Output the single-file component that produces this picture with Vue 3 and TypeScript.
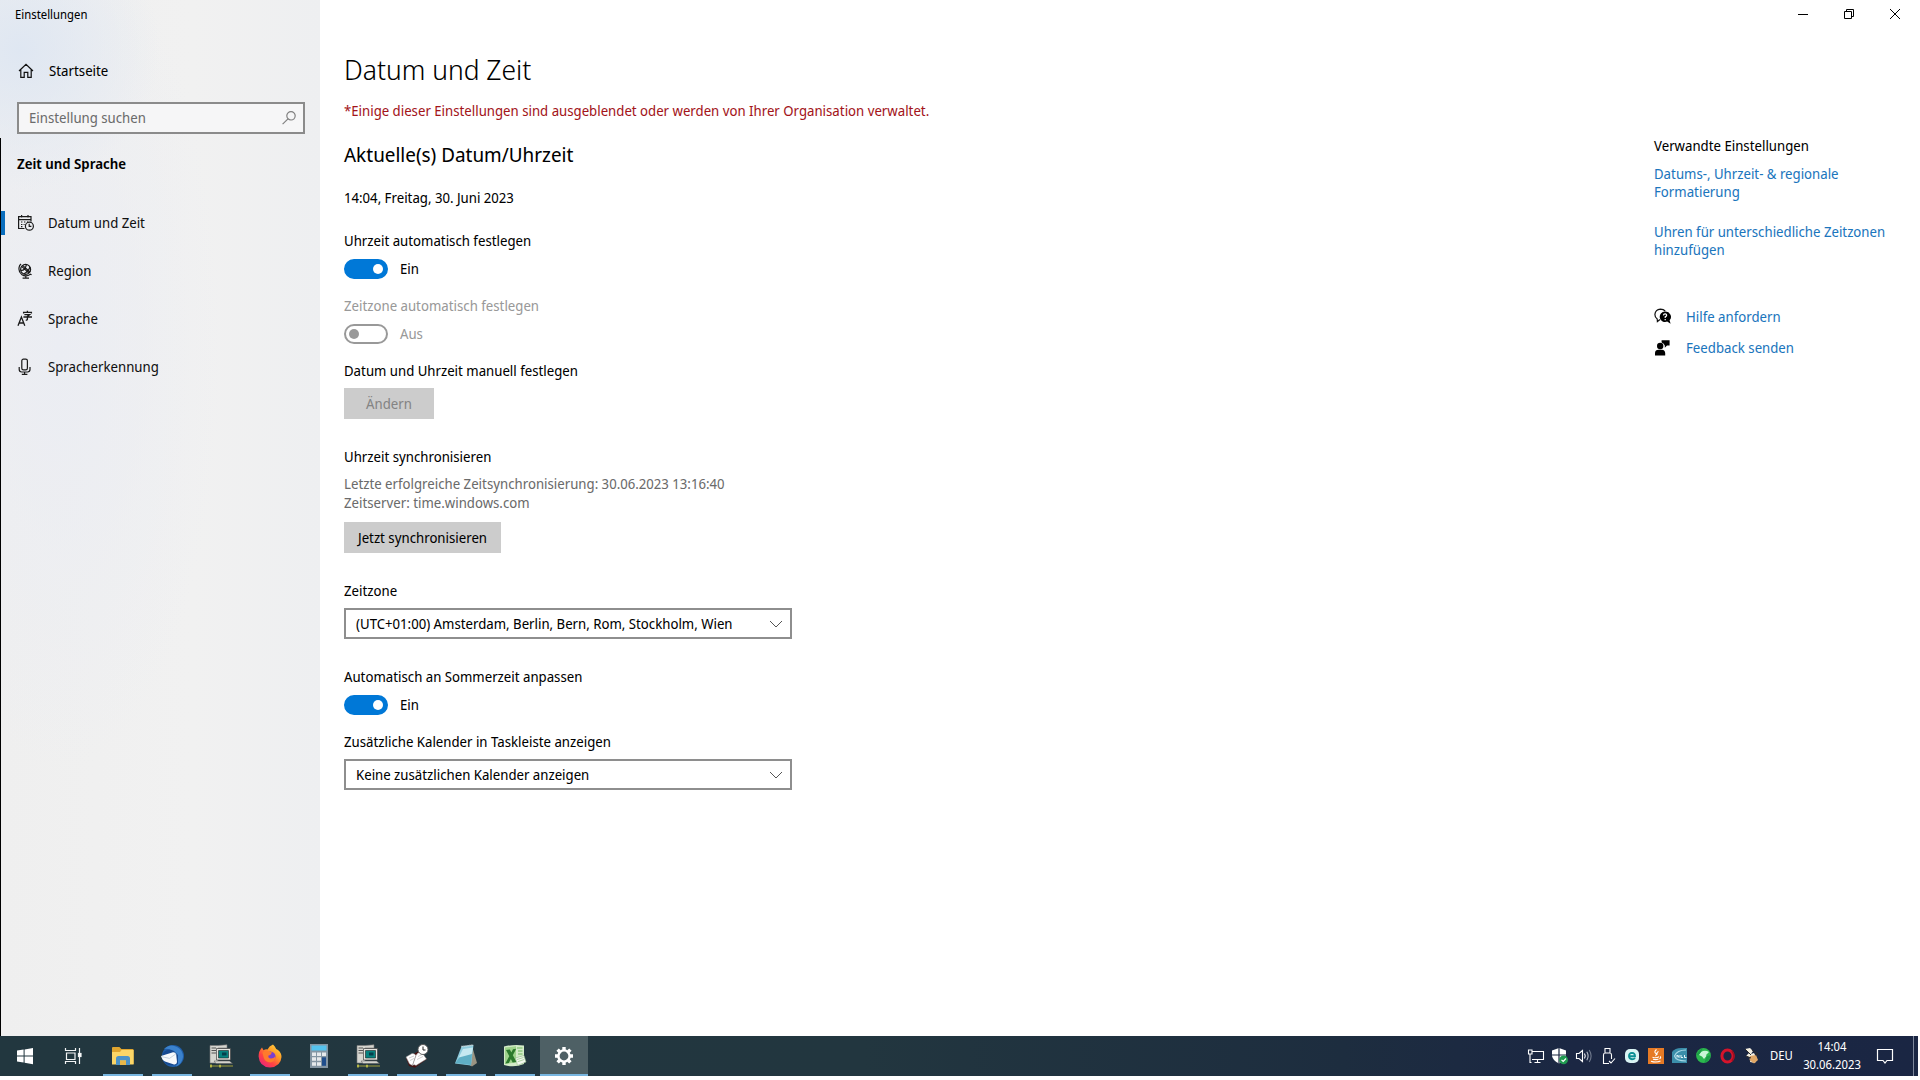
<script setup lang="ts">
import { ref } from 'vue'

interface NavItem {
  id: string
  label: string
}

interface TaskItem {
  id: string
  label: string
  icon: string
  open?: boolean
  active?: boolean
}

const nav: NavItem[] = [
  { id: 'date', label: 'Datum und Zeit' },
  { id: 'region', label: 'Region' },
  { id: 'language', label: 'Sprache' },
  { id: 'speech', label: 'Spracherkennung' },
]
const current = ref('date')

const autoTime = ref(true)
const autoZone = ref(false)
const summerTime = ref(true)
const search = ref('')

const tasks: TaskItem[] = [
  { id: 'start', label: 'Start', icon: 'start' },
  { id: 'view', label: 'Aktive Anwendungen', icon: 'view' },
  { id: 'explorer', label: 'Explorer', icon: 'explorer', open: true },
  { id: 'mail', label: 'Thunderbird', icon: 'mail', open: true },
  { id: 'pc1', label: 'Terminal 1', icon: 'pc' },
  { id: 'firefox', label: 'Firefox', icon: 'firefox', open: true },
  { id: 'calc', label: 'Rechner', icon: 'calc' },
  { id: 'pc2', label: 'Terminal 2', icon: 'pc', open: true },
  { id: 'planner', label: 'Zeiterfassung', icon: 'planner', open: true },
  { id: 'notes', label: 'Editor', icon: 'notes', open: true },
  { id: 'excel', label: 'Excel', icon: 'excel', open: true },
  { id: 'settings', label: 'Einstellungen', icon: 'gear', open: true, active: true },
]

const tray: string[] = ['network', 'shield', 'volume', 'usb', 'eset', 'java', 'dell', 'globe', 'opera', 'pen']
</script>

<template>
  <div class="screen">
    <div class="window">
      <aside class="sidebar">
        <div class="app-name">Einstellungen</div>
        <a class="home" href="#">
          <svg width="18" height="18" viewBox="0 0 18 18" fill="none" stroke="#111" stroke-width="1.2">
            <path d="M2 9 9 2.4 16 9M3.8 7.6V15.4H7.2V10.4H10.8V15.4H14.2V7.6" />
          </svg>
          <span>Startseite</span>
        </a>
        <div class="search">
          <input v-model="search" type="text" placeholder="Einstellung suchen" aria-label="Einstellung suchen" />
          <svg width="16" height="16" viewBox="0 0 16 16" fill="none" stroke="#808080" stroke-width="1.2">
            <circle cx="10" cy="5.8" r="4.2" />
            <path d="M7 8.8 1.6 14.2" />
          </svg>
        </div>
        <h2 class="category">Zeit und Sprache</h2>
        <nav>
          <a v-for="n in nav" :key="n.id" href="#" :class="{ current: n.id === current }" @click.prevent="current = n.id">
            <svg v-if="n.id === 'date'" width="18" height="18" viewBox="0 0 18 18" fill="none" stroke="#1a1a1a" stroke-width="1.2">
              <path d="M7.5 14.5H1.6V2.6H14V7.5M1.6 5.6H14M4.6 1V3.6M11 1V3.6" />
              <path d="M4 8H5.4M7 8H8.4M10 8H11M4 10.5H5.4M6.6 10.5H7.6M4 12.6H5.4" />
              <circle cx="12.4" cy="12.2" r="4" />
              <path d="M12.2 9.8V12.4H14.4" />
            </svg>
            <svg v-else-if="n.id === 'region'" width="18" height="18" viewBox="0 0 18 18" fill="none" stroke="#1a1a1a" stroke-width="1.2">
              <circle cx="8.6" cy="7.4" r="5" />
              <path d="M4.6 4.4 12 11M5.6 3.4 13 10M3.8 8.4Q8 9 9.4 2.6M6.6 12Q11.4 9.6 13 5M4 2 2.6 3.6Q.6 9 4.6 12.4 9 15.4 13.4 12.2L14.6 12.8M8.8 14V16M5.6 16.2H12" />
            </svg>
            <svg v-else-if="n.id === 'language'" width="18" height="18" viewBox="0 0 18 18" fill="none" stroke="#1a1a1a" stroke-width="1.3">
              <path d="M1 15.8 4.4 7 7.8 15.8M2.2 13H6.6" />
              <path d="M6.6 3.4V2.4H14.4V3.6M10.4 .8V2.4M7.4 4.6H12.6L10.4 6.4V9.2Q10.4 10.4 8.8 10M6.4 7H15" />
            </svg>
            <svg v-else width="18" height="18" viewBox="0 0 18 18" fill="none" stroke="#1a1a1a" stroke-width="1.2">
              <rect x="4.8" y="1.2" width="5.6" height="10.6" rx="1.6" />
              <path d="M2.2 9V11.6Q2.2 14 4.6 14H10.6Q13 14 13 11.6V9M7.6 14V16.2M4.8 16.4H10.4" />
            </svg>
            <span>{{ n.label }}</span>
          </a>
        </nav>
      </aside>

      <div class="content">
        <div class="titlebar">
          <button type="button" aria-label="Minimieren">
            <svg width="12" height="12" viewBox="0 0 12 12" stroke="#000" fill="none"><path d="M1 6.5H11" /></svg>
          </button>
          <button type="button" aria-label="Verkleinern">
            <svg width="12" height="12" viewBox="0 0 12 12" stroke="#000" fill="none">
              <path d="M1.5 3.5H8.5V10.5H1.5ZM3.5 3.5V1.5H10.5V8.5H8.5" />
            </svg>
          </button>
          <button type="button" aria-label="Schließen">
            <svg width="12" height="12" viewBox="0 0 12 12" stroke="#000" fill="none"><path d="M1 1 11 11M11 1 1 11" /></svg>
          </button>
        </div>

        <div class="columns">
          <main>
            <h1>Datum und Zeit</h1>
            <p class="notice">*Einige dieser Einstellungen sind ausgeblendet oder werden von Ihrer Organisation verwaltet.</p>
            <h2>Aktuelle(s) Datum/Uhrzeit</h2>
            <p class="now">14:04, Freitag, 30. Juni 2023</p>

            <section class="field">
              <label for="auto-time">Uhrzeit automatisch festlegen</label>
              <div class="switch">
                <input id="auto-time" v-model="autoTime" type="checkbox" role="switch" />
                <span>{{ autoTime ? 'Ein' : 'Aus' }}</span>
              </div>
            </section>
            <section class="field disabled">
              <label for="auto-zone">Zeitzone automatisch festlegen</label>
              <div class="switch">
                <input id="auto-zone" v-model="autoZone" type="checkbox" role="switch" disabled />
                <span>{{ autoZone ? 'Ein' : 'Aus' }}</span>
              </div>
            </section>
            <section class="field">
              <h3>Datum und Uhrzeit manuell festlegen</h3>
              <button class="action change" type="button" disabled>Ändern</button>
            </section>
            <section class="field apart">
              <h3>Uhrzeit synchronisieren</h3>
              <p class="detail">
                Letzte erfolgreiche Zeitsynchronisierung: 30.06.2023 13:16:40<br />
                Zeitserver: time.windows.com
              </p>
              <button class="action" type="button">Jetzt synchronisieren</button>
            </section>
            <section class="field apart">
              <label for="zone">Zeitzone</label>
              <div class="dropdown">
                <select id="zone">
                  <option>(UTC+01:00) Amsterdam, Berlin, Bern, Rom, Stockholm, Wien</option>
                </select>
                <svg width="14" height="8" viewBox="0 0 14 8" fill="none" stroke="#555"><path d="M1 1 7 7 13 1" /></svg>
              </div>
            </section>
            <section class="field apart">
              <label for="summer">Automatisch an Sommerzeit anpassen</label>
              <div class="switch">
                <input id="summer" v-model="summerTime" type="checkbox" role="switch" />
                <span>{{ summerTime ? 'Ein' : 'Aus' }}</span>
              </div>
            </section>
            <section class="field">
              <label for="calendars">Zusätzliche Kalender in Taskleiste anzeigen</label>
              <div class="dropdown">
                <select id="calendars">
                  <option>Keine zusätzlichen Kalender anzeigen</option>
                </select>
                <svg width="14" height="8" viewBox="0 0 14 8" fill="none" stroke="#555"><path d="M1 1 7 7 13 1" /></svg>
              </div>
            </section>
          </main>

          <aside class="related">
            <h3>Verwandte Einstellungen</h3>
            <a class="topic" href="#">Datums-, Uhrzeit- &amp; regionale Formatierung</a>
            <a class="topic" href="#">Uhren für unterschiedliche Zeitzonen hinzufügen</a>
            <div class="support">
              <a href="#">
                <svg width="18" height="18" viewBox="0 0 18 18">
                  <path d="M6 11.6 3.4 13.6 3.2 11Q.8 9 .9 6.4 1.4 1.6 6.4 1.2 9.6 1.2 11.2 3" fill="none" stroke="#111" stroke-width="1.2" />
                  <path d="M11 3.6A5.4 5.2 0 1 0 13.2 13.6L16.6 15.8 15.6 12.2A5.4 5.2 0 0 0 11 3.6Z" fill="#000" />
                  <path d="M9.4 7.4Q9.6 5.8 11.2 5.9 12.8 6.1 12.6 7.5 12.4 8.3 11.2 8.9V10M11.2 11V12.2" fill="none" stroke="#fff" stroke-width="1.2" />
                </svg>
                <span>Hilfe anfordern</span>
              </a>
              <a href="#">
                <svg width="18" height="18" viewBox="0 0 18 18">
                  <circle cx="6.2" cy="7" r="3.2" />
                  <path d="M1 16.600V14Q1.200 10.800 4.600 10.800H8Q11 11 11.200 14V16.600ZM7.600 1.200H15.600V6.600H13L10.800 8.800V6.600L9.400 4.400 7.600 3.400Z" />
                </svg>
                <span>Feedback senden</span>
              </a>
            </div>
          </aside>
        </div>
      </div>
    </div>

    <footer class="taskbar">
      <div class="tasks">
        <button v-for="t in tasks" :key="t.id" type="button" :aria-label="t.label" :class="{ open: t.open, active: t.active }">
          <svg v-if="t.icon === 'start'" width="24" height="24" viewBox="0 0 24 24" fill="#fff">
            <path d="M4 6.6 10.6 5.6V11.6H4ZM11.6 5.4 20 4V11.6H11.6ZM4 12.6H10.6V18.6L4 17.6ZM11.6 12.6H20V20.2L11.6 18.8Z" />
          </svg>
          <svg v-else-if="t.icon === 'view'" width="24" height="24" viewBox="0 0 24 24" fill="none" stroke="#f2f4f5" stroke-width="1.2">
            <path d="M3.500 4V6.500H13.500V4M3.500 20V17.500H13.500V20M4.500 9H13V15.500H4.500ZM17.500 4V9M17.500 13V20" />
            <rect x="16.500" y="9.500" width="2.500" height="3" fill="#fff" />
          </svg>
          <svg v-else-if="t.icon === 'explorer'" width="24" height="24" viewBox="0 0 24 24">
            <path d="M1 4Q1 3 2 3H8.400L10.400 5H21.600Q22.600 5 22.600 6V20H1Z" fill="#dfa52f" />
            <path d="M1 8H9L10.500 6H22.600V20.600H1Z" fill="#fbd667" />
            <path d="M5 21V14.500Q5 12 7.500 12H16.500Q19 12 19 14.500V21H15V16.500H9V21Z" fill="#4c93c8" />
            <path d="M9 16.500H15V21H9Z" fill="#e8b84a" />
          </svg>
          <svg v-else-if="t.icon === 'mail'" width="24" height="24" viewBox="0 0 24 24">
            <circle cx="13" cy="12" r="11" fill="#1f5da8" />
            <path d="M4 5Q10-1 17 3 23 6 23 13 22 20 16 22.500 20 14 15 9 9 4 4 5Z" fill="#3b82cd" />
            <path d="M3 9Q8 3 14 7L18 11V20Q10 23 5 19Q1 15 3 9Z" fill="#174a90" />
            <path d="M1 12 13 8.200Q15.500 8 16.200 10.500L17 18Q16.800 20.800 14 20.400L5 17.600Q2.500 16.500 1 12Z" fill="#f7f9fb" />
            <path d="M1.400 12.600 9.500 14.400 16 9.800" fill="none" stroke="#b9c9d8" stroke-width=".8" />
          </svg>
          <svg v-else-if="t.icon === 'pc'" width="26" height="24" viewBox="0 0 26 24">
            <path d="M2 1.500H10L19 .800V4H10V19H2Z" fill="#d6d6d0" stroke="#777" stroke-width=".6" />
            <path d="M3.500 4H8M3.500 6.500H8M3.500 9H8" stroke="#555" />
            <path d="M8.500 4.500H22.500V16H8.500Z" fill="#e4e4df" stroke="#444" stroke-width=".7" />
            <path d="M10.500 6.500H20.500V14H10.500Z" fill="#07827f" stroke="#222" stroke-width=".6" />
            <path d="M14 8.500H18.500V11.500H14Z" fill="#063f4c" />
            <path d="M6 17H21.500L24.500 19.500H8Z" fill="#d4d4ce" stroke="#555" stroke-width=".5" />
            <path d="M2 22H25" stroke="#8f8f3c" stroke-width="1.200" />
            <path d="M3 20.500V23.500M12 20.800V23.400" stroke="#d4d44a" stroke-width="1.400" />
          </svg>
          <svg v-else-if="t.icon === 'firefox'" width="24" height="24" viewBox="0 0 24 24">
            <defs>
              <linearGradient id="fox" x1="1" y1="0" x2=".2" y2="1">
                <stop offset="0" stop-color="#ffe34a" />
                <stop offset=".4" stop-color="#ff9a25" />
                <stop offset=".7" stop-color="#ff4343" />
                <stop offset="1" stop-color="#e8237f" />
              </linearGradient>
            </defs>
            <path d="M15 .500Q17 2 18.200 5L20 6Q23.600 9 23.500 13 22.800 22.500 12 23.600 1.400 22.800.600 12.500.600 7 4 3.500L5.500 6.200Q7.500 5 9.500 5.400 11 2 15 .500Z" fill="url(#fox)" />
            <circle cx="12.400" cy="12.600" r="5.200" fill="#7a3fd0" />
            <path d="M4.500 8.500Q7.500 5.500 11 7.500L14 8.500Q13 11 10.500 11.500 9.500 14 13 14.500 16 14.500 17.500 12 17.800 17.500 12.500 18.500 6.500 18 5.500 13Z" fill="#ff7a2c" />
          </svg>
          <svg v-else-if="t.icon === 'calc'" width="24" height="24" viewBox="0 0 24 24">
            <rect x="3" y="0" width="18" height="24" fill="#8496a3" />
            <rect x="4.500" y="1.500" width="15" height="5" fill="#55c3ee" />
            <path d="M5 8.500H9V12H5ZM10 8.500H14V12H10ZM15 8.500H19V12H15ZM5 13.300H9V16.800H5ZM10 13.300H14V16.800H10ZM5 18.200H9V21.800H5ZM10 18.200H14V21.800H10Z" fill="#e6eaec" />
            <path d="M15 13.300H19V21.800H15Z" fill="#1f4e8c" />
          </svg>
          <svg v-else-if="t.icon === 'planner'" width="26" height="24" viewBox="0 0 26 24">
            <path d="M2 14 15 7 23 15 11 23.800 5 22Z" fill="#4a1210" />
            <path d="M2 13 8 9.500Q10.500 9 12 11.500L8.500 21.500 5.500 20Z" fill="#fff" stroke="#888" stroke-width=".5" />
            <path d="M12 11.500Q14 7.500 18 8.500L22.500 15 12 21.500Q10 20 8.500 21.500Z" fill="#fff" stroke="#888" stroke-width=".5" />
            <path d="M5 14 10 12M6 16.500 10 14.500M14 12.500 18 10.500M13 15.500 19 12.500" stroke="#bbb" stroke-width=".7" />
            <circle cx="19" cy="5.500" r="5" fill="#fff" stroke="#555" stroke-width=".9" />
            <path d="M19 2.500V6H21.500" fill="none" stroke="#222" />
          </svg>
          <svg v-else-if="t.icon === 'notes'" width="24" height="24" viewBox="0 0 24 24">
            <path d="M18 2 23 19 18 22.500 14 20Z" fill="#9a9482" />
            <path d="M7.500 2.500 19.500 1 17 21.500 1 19.500Z" fill="#8ecbdc" />
            <path d="M9 5 19 3.500 17 13 4 15Z" fill="#c6e9f1" />
            <path d="M5 13.500 18 10 17 21 1.500 19Z" fill="#5fafc5" />
            <path d="M7.500 2.500 19.500 1" stroke="#e5eef0" stroke-width="1.400" stroke-dasharray="1.200 .800" />
          </svg>
          <svg v-else-if="t.icon === 'excel'" width="24" height="24" viewBox="0 0 24 24">
            <path d="M1 2.500Q11 0 21 1.500V20Q11 24 1 21Z" fill="#d3ebc8" />
            <path d="M2 3.500 13 2.200V18.500L2 20Z" fill="#9ed38c" />
            <path d="M14 4H19.500M15 7H19.500M15 10H19.500" stroke="#8fc980" stroke-width="1.400" />
            <path d="M3 6 6.800 5.500 13.500 18 9.700 18.500ZM10 5.200 13.200 4.800 5.800 19 2.400 19.400Z" fill="#2b7a2c" />
            <path d="M12.500 14 21 11.500 23 18 14.500 21.500Z" fill="#f2f8ee" stroke="#8fb886" stroke-width=".6" />
            <path d="M14 15.500 20.500 13.500M14.700 17.700 21.200 15.500" stroke="#9cc690" stroke-width=".8" />
          </svg>
          <svg v-else width="24" height="24" viewBox="0 0 24 24" fill="none" stroke="#fff">
            <circle cx="12" cy="12" r="5.600" stroke-width="2.400" />
            <path d="M12 3V6M12 18V21M3 12H6M18 12H21M5.600 5.600 7.800 7.800M16.200 16.200 18.400 18.400M18.400 5.600 16.200 7.800M7.800 16.200 5.600 18.400" stroke-width="3.400" />
          </svg>
        </button>
      </div>

      <div class="tray">
        <span v-for="i in tray" :key="i" class="tray-icon">
          <svg v-if="i === 'network'" width="18" height="18" viewBox="0 0 18 18" fill="none" stroke="#fff" stroke-width="1.100">
            <path d="M5 4.500H16.500V12.500H5M10.500 12.500V15M7.500 15.500H13.500M3 7V15.500H4.500" />
            <path d="M1.500 3H5V7H1.500Z" />
          </svg>
          <svg v-else-if="i === 'shield'" width="18" height="18" viewBox="0 0 18 18">
            <path d="M8 1 15 3.500V9Q14 14 8 16.500 2 14 1 9V3.500Z" fill="#fff" />
            <path d="M8 1V16.500M1 8H15" stroke="#1b2843" stroke-width="1.200" />
            <circle cx="12.600" cy="12.800" r="4.400" fill="#1f9a50" />
            <path d="M10.500 12.800 12.200 14.500 15 11.500" fill="none" stroke="#fff" stroke-width="1.200" />
          </svg>
          <svg v-else-if="i === 'volume'" width="18" height="18" viewBox="0 0 18 18" fill="none" stroke="#fff" stroke-width="1.100">
            <path d="M1.500 6.500H4L7.500 3.500V14.500L4 11.500H1.500ZM9.500 6.500Q11 9 9.500 11.500" />
            <path d="M11.800 4.800Q14.400 9 11.800 13.200" stroke="#b7bdc8" />
            <path d="M14.200 3Q18 9 14.200 15" stroke="#717b8e" />
          </svg>
          <svg v-else-if="i === 'usb'" width="18" height="18" viewBox="0 0 18 18" fill="none" stroke="#fff" stroke-width="1.100">
            <path d="M10 16.500H4.500V8Q4.500 6 6 6H11Q12.500 6 12.500 8V12M6 6V1.500H11V6M10 14 12 16 16 11.500" />
          </svg>
          <svg v-else-if="i === 'eset'" width="18" height="18" viewBox="0 0 18 18">
            <rect x="2" y="2" width="14" height="14" rx="5" fill="#d9f4f4" />
            <path d="M6 9.200H12Q12 6 9 5.900 6 6 6 9.200 6.200 12 9 12.200 11 12.200 12 11" fill="none" stroke="#0b8f95" stroke-width="1.900" />
          </svg>
          <svg v-else-if="i === 'java'" width="18" height="18" viewBox="0 0 18 18">
            <rect x="1" y="1" width="16" height="16" fill="#e67a25" />
            <path d="M9.500 2.500Q6.500 5 9 6.500 10 7.500 8.500 9M11.500 4.500Q9 6 10.500 7.500M5.500 10.200Q9 11.500 12 9.800M6 12.200Q9 13.200 11.500 12M4 14.200Q9 16 13.500 14M13 9.500Q14.500 10.500 12.500 12" fill="none" stroke="#fff" stroke-width="1.100" />
          </svg>
          <svg v-else-if="i === 'dell'" width="18" height="18" viewBox="0 0 18 18">
            <path d="M1 5Q4 1 10 1H16V16H1Z" fill="#3b8eaa" />
            <path d="M15 3Q6 3 3.500 9 5 14 15 14" fill="none" stroke="#a9d8e6" stroke-width="1.200" />
            <path d="M6 10.500V8L8 10.500V8M10 8V10.500H12M13.500 8V10.500H15.500" fill="none" stroke="#e6f5f9" />
          </svg>
          <svg v-else-if="i === 'globe'" width="18" height="18" viewBox="0 0 18 18">
            <circle cx="8.500" cy="8.500" r="7.400" fill="#2bb84e" />
            <path d="M6 5Q10 2.500 14 5L11 8 11.500 9 9 12 7 9.500 4 8Z" fill="#c9f5d6" />
            <path d="M1.500 8Q3.500 3 7.500 1.500L6 5 3 8.500ZM11.500 9.500 15.500 8Q15 13.500 9.500 15.500Z" fill="#1b9c46" />
          </svg>
          <svg v-else-if="i === 'opera'" width="18" height="18" viewBox="0 0 18 18">
            <ellipse cx="8.500" cy="9" rx="5.600" ry="6" fill="none" stroke="#d5142b" stroke-width="3" />
            <path d="M13 4Q17 9 13 14" fill="none" stroke="#a00e20" stroke-width="1.600" />
          </svg>
          <svg v-else width="18" height="18" viewBox="0 0 18 18">
            <path d="M2 2 7 1 10 4 8 7 11 6 14 12 12 16 7 15 8 11 3 9 6 6Z" fill="#f4efe2" />
            <path d="M7 9 13 8 15 13 11 16.500 6.500 13Z" fill="#e0a766" />
            <path d="M2 2 8 8M9 3 15 7 12 8M3 9 8 11" fill="none" stroke="#2c2a2a" />
          </svg>
        </span>
        <span class="lang">DEU</span>
        <time class="clock">14:04<br />30.06.2023</time>
        <button class="notify" type="button" aria-label="Benachrichtigungen">
          <svg width="18" height="18" viewBox="0 0 18 18" fill="none" stroke="#fff" stroke-width="1.200">
            <path d="M1.500 2.500H16.500V13.500H11L9 16 7 13.500H1.500Z" />
          </svg>
        </button>
        <span class="desktop"></span>
      </div>
    </footer>
  </div>
</template>

<style>
body {
  margin: 0;
  background: #fff;
}
</style>

<style scoped>
.screen {
  box-sizing: border-box;
  min-height: 100vh;
  padding: 0 2px 4px 0;
  display: flex;
  flex-direction: column;
  background: #fff;
  color: #000;
  font: 14px/20px 'Noto Sans Display', 'Open Sans', 'Noto Sans', sans-serif;
}
h1, h2, h3, p {
  margin: 0;
  font-weight: 400;
}
h3 {
  font-size: 14px;
}
a {
  color: #1c76bd;
  text-decoration: none;
}
button, input, select {
  font: inherit;
  color: inherit;
}
svg {
  flex: none;
  display: block;
}
.window {
  flex: 1;
  display: flex;
}

/* navigation pane */
.sidebar {
  flex: none;
  box-sizing: border-box;
  width: 320px;
  padding: 6px 0 0;
  background:
    linear-gradient(#000, #000) 0 138px / 1px 100% no-repeat,
    radial-gradient(circle at 20px 50px, #dfe7f2, transparent 140px),
    radial-gradient(ellipse at 60px 350px, #ebedf3, transparent 160px),
    linear-gradient(90deg, #efefef, #f1f1f1 60%, #eeeff1);
}
.app-name {
  padding-left: 15px;
  font-size: 12px;
  line-height: 18px;
}
.home {
  margin-top: 37px;
  padding-left: 17px;
  display: flex;
  align-items: center;
  gap: 14px;
  color: #000;
}
.search {
  margin: 21px 15px 0 17px;
  box-sizing: border-box;
  height: 32px;
  display: flex;
  align-items: center;
  padding-right: 6px;
  border: 2px solid #8b8b8b;
  background: #f6f6f7;
}
.search input {
  flex: 1;
  min-width: 0;
  padding: 0 10px;
  border: 0;
  outline: 0;
  background: none;
}
.search input::placeholder {
  color: #6c6c6c;
  opacity: 1;
}
.category {
  margin: 20px 0 0 17px;
  font-size: 14px;
  line-height: 20px;
  font-weight: 600;
}
nav {
  margin-top: 25px;
}
nav a {
  height: 48px;
  padding-left: 17px;
  display: flex;
  align-items: center;
  gap: 13px;
  color: #111;
}
nav a.current {
  background: linear-gradient(#0a6ebd, #0a6ebd) 1px center / 4px 24px no-repeat;
}

/* content pane */
.content {
  flex: 1;
  min-width: 0;
}
.titlebar {
  display: flex;
  justify-content: flex-end;
}
.titlebar button {
  width: 46px;
  height: 28px;
  padding: 0;
  border: 0;
  background: none;
  display: grid;
  place-items: center;
}
.columns {
  display: flex;
  justify-content: space-between;
  padding: 0 24px;
}
main {
  padding-top: 23px;
}
h1 {
  font-size: 28px;
  line-height: 36px;
  font-weight: 300;
}
.notice {
  margin-top: 14px;
  color: #a3151b;
}
main h2 {
  margin-top: 20px;
  font-size: 20px;
  line-height: 28px;
}
.now {
  margin: 19px 0 23px;
}
.field {
  margin-top: 17px;
}
.field.apart {
  margin-top: 28px;
}
.field label {
  display: block;
}
.field.disabled {
  color: #999;
}
.switch {
  margin-top: 8px;
  height: 20px;
  display: flex;
  align-items: center;
  gap: 12px;
}
.switch input {
  appearance: none;
  box-sizing: border-box;
  width: 44px;
  height: 20px;
  margin: 0;
  padding: 0 3px;
  display: flex;
  align-items: center;
  border: 2px solid #999;
  border-radius: 10px;
}
.switch input::before {
  content: '';
  width: 10px;
  height: 10px;
  border-radius: 50%;
  background: #999;
}
.switch input:checked {
  justify-content: flex-end;
  border-color: #0078d7;
  background: #0078d7;
}
.switch input:checked::before {
  background: #fff;
}
.action {
  display: block;
  height: 31px;
  margin-top: 7px;
  padding: 0 14px;
  border: 0;
  background: #ccc;
}
.change {
  min-width: 90px;
}
.action:disabled {
  color: #848484;
}
.detail {
  margin: 7px 0 10px;
  line-height: 19px;
  color: #6b6b6b;
}
.dropdown {
  margin-top: 7px;
  display: grid;
  align-items: center;
  width: 448px;
}
.dropdown > * {
  grid-area: 1 / 1;
}
.dropdown select {
  appearance: none;
  box-sizing: border-box;
  width: 100%;
  height: 31px;
  padding: 0 30px 0 10px;
  border: 2px solid #8e8e8e;
  border-radius: 0;
  background: #fff;
}
.dropdown svg {
  justify-self: end;
  margin-right: 9px;
  pointer-events: none;
}

/* related links */
.related {
  width: 240px;
  padding-top: 108px;
}
.related a {
  line-height: 18px;
}
.topic {
  display: block;
  margin-top: 9px;
}
.topic + .topic {
  margin-top: 22px;
}
.support {
  margin-top: 49px;
  display: grid;
  gap: 13px;
}
.support a {
  display: flex;
  align-items: center;
  gap: 14px;
}

/* taskbar */
.taskbar {
  height: 40px;
  display: flex;
  justify-content: space-between;
  color: #fff;
  font-size: 12px;
  background: linear-gradient(90deg, #22373f, #22363f 45%, #1d2d3f 70%, #1b2743 82%, #1a2643);
}
.tasks {
  display: flex;
  gap: 1px;
  padding-left: 1px;
}
.tasks button {
  width: 48px;
  padding: 0;
  border: 0;
  background: none;
  display: grid;
  place-items: center;
}
.tasks .open {
  background: linear-gradient(#78b6e0, #78b6e0) center bottom / 40px 2px no-repeat;
}
.tasks .active {
  background: linear-gradient(#78b6e0, #78b6e0) center bottom / 100% 2px no-repeat, #4e6065;
}
.tray {
  display: flex;
  align-items: center;
}
.tray-icon {
  width: 24px;
  display: grid;
  place-items: center;
}
.lang {
  width: 35px;
  text-align: center;
}
.clock {
  width: 66px;
  line-height: 18px;
  text-align: center;
}
.notify {
  width: 40px;
  height: 40px;
  margin-right: 8px;
  padding: 0;
  border: 0;
  background: none;
  display: grid;
  place-items: center;
}
.desktop {
  width: 4px;
  height: 40px;
  border-left: 1px solid #7d879b;
}
</style>
